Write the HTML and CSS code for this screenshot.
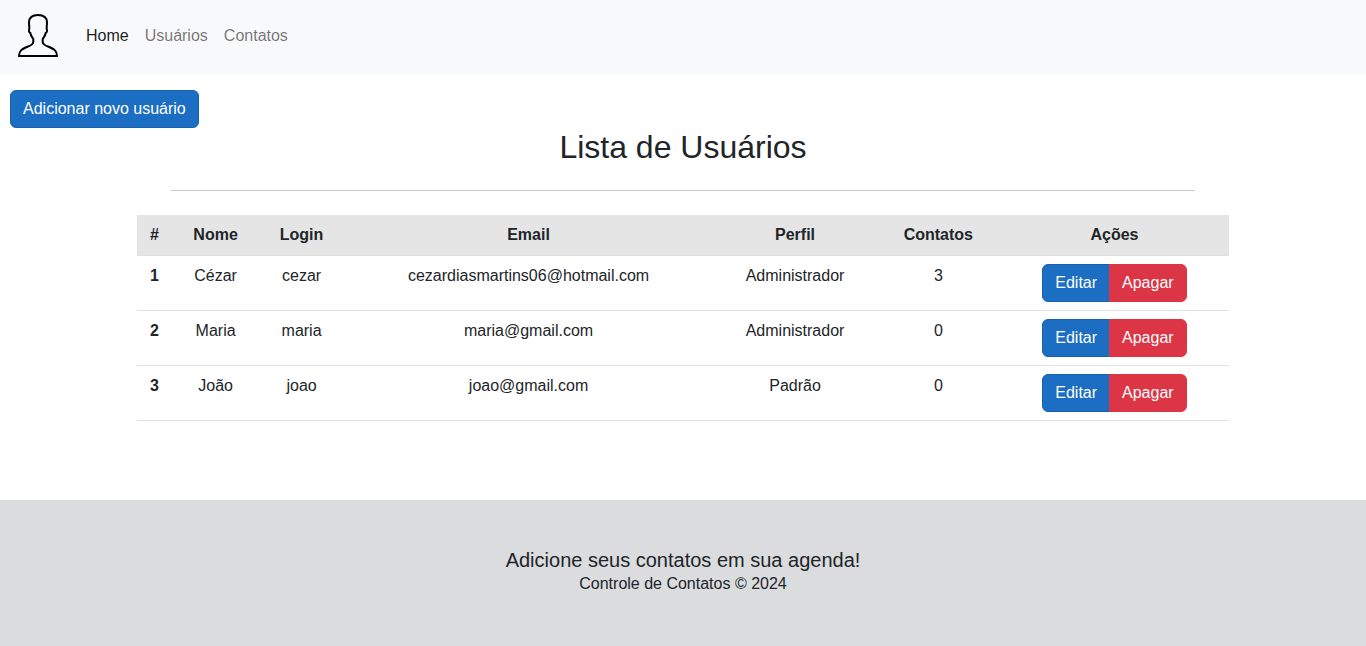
FILE: index.html
```html
<!DOCTYPE html>
<html lang="pt-BR">
<head>
<meta charset="utf-8">
<meta name="viewport" content="width=device-width, initial-scale=1">
<title>Lista de Usuários</title>
<link rel="stylesheet" href="styles.css">
</head>
<body>
<header class="navbar">
  <a class="brand" href="#" aria-label="Início">
    <svg class="brand-icon" viewBox="0 0 44 48" aria-hidden="true"><path d="M22 3C15.500 3 13 6 13 10.500C13 13 13.500 15 13.300 17C12.500 18 13 20.500 14.300 21C14.800 24 16.200 25.500 17.300 27V30C17 32.500 15 33.500 12 34.500C6 37 3 38.500 3 44H41C41 38.500 38 37 32 34.500C29 33.500 27 32.500 26.700 30V27C27.800 25.500 29.200 24 29.700 21C31 20.500 31.500 18 30.700 17C30.500 15 31 13 31 10.500C31 6 28.500 3 22 3Z"/></svg>
  </a>
  <nav class="nav-links">
    <a class="nav-link active" href="#">Home</a>
    <a class="nav-link" href="#">Usuários</a>
    <a class="nav-link" href="#">Contatos</a>
  </nav>
</header>
<main class="content">
  <button class="btn btn-primary" type="button">Adicionar novo usuário</button>
  <h1 class="title">Lista de Usuários</h1>
  <hr class="divider">
  <table class="table">
    <thead>
      <tr><th>#</th><th>Nome</th><th>Login</th><th>Email</th><th>Perfil</th><th>Contatos</th><th>Ações</th></tr>
    </thead>
    <tbody>
      <tr><th>1</th><td>Cézar</td><td>cezar</td><td>cezardiasmartins06@hotmail.com</td><td>Administrador</td><td>3</td><td><div class="btn-group"><button class="btn btn-primary" type="button">Editar</button><button class="btn btn-danger" type="button">Apagar</button></div></td></tr>
      <tr><th>2</th><td>Maria</td><td>maria</td><td>maria@gmail.com</td><td>Administrador</td><td>0</td><td><div class="btn-group"><button class="btn btn-primary" type="button">Editar</button><button class="btn btn-danger" type="button">Apagar</button></div></td></tr>
      <tr><th>3</th><td>João</td><td>joao</td><td>joao@gmail.com</td><td>Padrão</td><td>0</td><td><div class="btn-group"><button class="btn btn-primary" type="button">Editar</button><button class="btn btn-danger" type="button">Apagar</button></div></td></tr>
    </tbody>
  </table>
</main>
<footer class="footer">
  <p class="footer-lead">Adicione seus contatos em sua agenda!</p>
  <p class="footer-copy">Controle de Contatos © 2024</p>
</footer>
</body>
</html>
```

FILE: styles.css
```css
* { box-sizing: border-box; }
body { margin: 0; font: 16px/24px "Liberation Sans", Arial, sans-serif; color: #212529; background: #fff; }
.navbar { display: flex; align-items: center; padding: 8px 16px 10px; background: #f8f9fa; }
.brand { display: flex; margin-right: 18px; padding: 4px 0; }
.brand-icon { width: 44px; height: 48px; fill: none; stroke: #000; stroke-width: 2; }
.nav-links { display: flex; }
.nav-link { padding: 8px; color: rgba(0, 0, 0, .55); text-decoration: none; }
.nav-link.active { color: rgba(0, 0, 0, .9); }
.content { padding: 16px 0 79px; }
.btn { display: block; padding: 6px 12px; border: 1px solid; border-radius: 6px; font: inherit; color: #fff; cursor: pointer; }
.content > .btn { margin-left: 10px; }
.btn-primary { background: #1b6ec2; border-color: #1861ac; }
.btn-danger { background: #dc3545; border-color: #dc3545; }
.title { margin: 0 0 24px; font-size: 32px; line-height: 38px; font-weight: 400; text-align: center; }
.divider { width: 75%; margin: 0 auto 24px; border: 0; border-top: 1px solid #c8c9ca; }
.table { width: 80%; margin: 0 auto; border-collapse: collapse; text-align: center; }
.table th, .table td { padding: 8px; border-bottom: 1px solid #dee2e6; vertical-align: top; }
.table thead th { background: #e5e5e5; border-bottom-color: #e0e0e0; }
.btn-group { display: inline-flex; vertical-align: middle; }
.btn-group .btn:first-child { border-radius: 6px 0 0 6px; }
.btn-group .btn:last-child { border-radius: 0 6px 6px 0; margin-left: -1px; }
.footer { padding: 48px 16px 50px; background: #dadcde; text-align: center; }
.footer p { margin: 0; }
.footer-lead { font-size: 20px; }
```
